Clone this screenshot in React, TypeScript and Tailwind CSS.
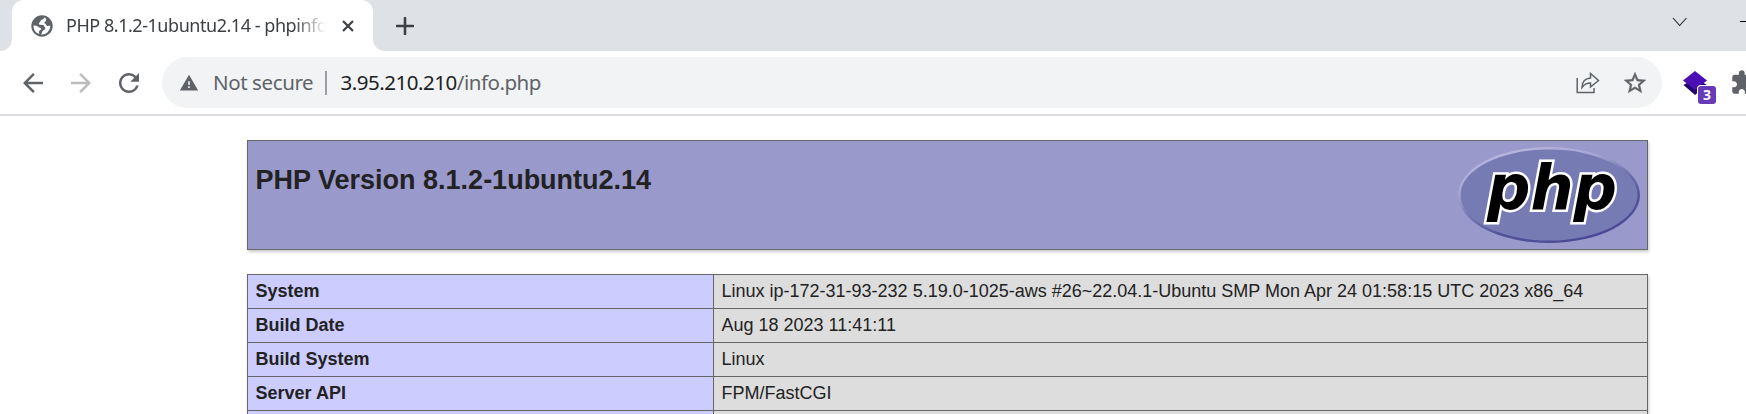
import React from "react";
import { MdArrowBack, MdArrowForward, MdRefresh, MdWarning, MdExtension } from "react-icons/md";

const rows: [string, string][] = [
  ["System", "Linux ip-172-31-93-232 5.19.0-1025-aws #26~22.04.1-Ubuntu SMP Mon Apr 24 01:58:15 UTC 2023 x86_64"],
  ["Build Date", "Aug 18 2023 11:41:11"],
  ["Build System", "Linux"],
  ["Server API", "FPM/FastCGI"],
  ["", ""],
];

function GlobeIcon() {
  return (
    <svg width="22" height="22" viewBox="0 0 22 22" className="shrink-0">
      <circle cx="11" cy="11" r="10.7" fill="#5f6368" />
      <path
        d="M13 2.500C13 4 11.500 4.500 10.300 5C9.300 5.500 9.500 7 8.500 7.500C7.500 8 7.500 9.500 9 9.800L12 10C13.500 10.300 13 12 14 12.500C15 13.300 14 14.500 13 14.800C11.300 15.300 11.500 17.500 10 19.400A8.500 8.500 0 0 0 19.400 11C18.500 10.500 17.500 11.300 16 10.900C14.800 10.500 15.300 9 14 8.600C13 8.200 13.200 7 14.300 6.600C15.300 6.200 15.500 4.300 14.500 3Z"
        fill="#fff"
      />
      <path d="M2.500 10.500C4 10.500 6.500 10.500 7.500 12C8 13 10.300 12.500 10.200 14C10 15.500 8 15 8 16.500L8.200 19A8.500 8.500 0 0 1 2.500 10.500Z" fill="#fff" />
    </svg>
  );
}

function TabStrip() {
  return (
    <div className="flex h-[51px] bg-[#dee1e6]">
      <div className="flex w-3 items-end bg-white">
        <div className="h-full w-3 rounded-br-[12px] bg-[#dee1e6]" />
      </div>
      <div className="flex h-[51px] w-[361px] items-center rounded-t-[12px] bg-white pl-[19px]">
        <GlobeIcon />
        <div className="ml-[13px] w-[262px] whitespace-nowrap text-[18px] tracking-[-0.46px] text-[#3c4043] [mask-image:linear-gradient(to_right,black_228px,transparent_260px)]">
          PHP 8.1.2-1ubuntu2.14 - phpinfo
        </div>
        <svg width="12" height="12" viewBox="0 0 12 12" className="ml-[14px] shrink-0">
          <path d="M1 1L11 11M11 1L1 11" stroke="#3c4043" strokeWidth="2.200" />
        </svg>
      </div>
      <div className="w-3 bg-white">
        <div className="h-full w-3 rounded-bl-[12px] bg-[#dee1e6]" />
      </div>
      <div className="flex flex-1 items-center">
        <svg width="18" height="18" viewBox="0 0 18 18" className="ml-[11px]">
          <path d="M9 1V17M1 9H17" stroke="#3c4043" strokeWidth="2.600" strokeLinecap="round" />
        </svg>
      </div>
      <svg width="16" height="10" viewBox="0 0 16 10" className="mt-[17px] mr-[52px]">
        <path d="M1 1L7.700 8.500L14.500 1" fill="none" stroke="#222" strokeWidth="1.100" />
      </svg>
      <div className="mt-[21px] h-px w-1.5 bg-black" />
    </div>
  );
}

function ShareIcon() {
  return (
    <svg width="24" height="22" viewBox="0 0 24 22" fill="none" stroke="#5f6368" strokeWidth="1.500">
      <path d="M1.200 6V20.500H18V16" />
      <path d="M6 15.500C6 10 9 6.500 14.500 6V1.500L22.500 8.500L14.500 15V11C10.500 11 8 12.500 6 15.500Z" />
    </svg>
  );
}

function StarIcon() {
  return (
    <svg width="26" height="26" viewBox="0 0 24 24" fill="#5f6368" stroke="#5f6368" strokeWidth="0.4">
      <path d="M22 9.240l-7.190-.62L12 2 9.190 8.630 2 9.240l5.460 4.730L5.820 21 12 17.270 18.180 21l-1.630-7.030L22 9.240zM12 15.400l-3.760 2.270 1-4.280-3.320-2.880 4.380-.38L12 6.100l1.710 4.040 4.380.38-3.320 2.880 1 4.280L12 15.400z" />
    </svg>
  );
}

function Toolbar() {
  return (
    <div className="flex h-[65px] items-center overflow-hidden border-b-2 border-[#dcdde0] bg-white">
      <MdArrowBack className="ml-[18px] size-[30px] shrink-0 text-[#5f6368]" />
      <MdArrowForward className="ml-[18px] size-[30px] shrink-0 text-[#babcbe]" />
      <MdRefresh className="ml-[18px] size-[30px] shrink-0 text-[#5f6368]" />
      <div className="ml-[18px] flex h-[51px] w-[1500px] shrink-0 items-center rounded-full bg-[#f1f3f4] text-[20.5px] whitespace-nowrap">
        <MdWarning className="ml-[17px] size-5 text-[#5f6368]" />
        <span className="ml-[14px] w-[112px] tracking-[-0.4px] text-[#5f6368]">Not secure</span>
        <div className="h-6 w-0.5 bg-[#9aa0a6]" />
        <span className="ml-[13.5px] tracking-[-0.48px] text-[#202124]">
          3.95.210.210<span className="text-[#5f6368]">/info.php</span>
        </span>
        <div className="mr-[14px] ml-auto flex items-center gap-[22px]">
          <ShareIcon />
          <StarIcon />
        </div>
      </div>
      <div className="relative ml-[21px] h-[34px] w-[34px] shrink-0">
        <svg width="25" height="25" viewBox="0 0 25 25" className="mt-[5px]">
          <path d="M0.500 14L12 7L24 14L12 24Z" fill="#1f0668" />
          <path d="M0 9.500L12 0L24 9.500L12 19Z" fill="#4b0fb4" />
        </svg>
        <div className="absolute top-[20px] left-[15px] flex size-[18px] items-center justify-center rounded-[3px] bg-[#673ab7] text-[14px] leading-none font-bold text-white ring-1 ring-white">
          3
        </div>
      </div>
      <MdExtension className="ml-[13px] size-[27px] shrink-0 text-[#5f6368]" />
    </div>
  );
}

function PhpLogo() {
  return (
    <svg width="182" height="96" viewBox="0 0 182 96">
      <defs>
        <linearGradient id="rim" x1="0.200" y1="0" x2="0.750" y2="1">
          <stop offset="0" stopColor="#b9b9e0" />
          <stop offset="0.300" stopColor="#a6a6d4" />
          <stop offset="0.500" stopColor="#7377b0" />
          <stop offset="0.700" stopColor="#54549a" />
          <stop offset="1" stopColor="#484893" />
        </linearGradient>
      </defs>
      <ellipse cx="91" cy="48" rx="91" ry="48" fill="url(#rim)" />
      <ellipse cx="91" cy="48" rx="88.500" ry="45.500" fill="#777bb4" />
      <text
        x="29"
        y="62"
        fontFamily="DejaVu Sans"
        fontSize="62"
        fontWeight="700"
        fontStyle="italic"
        textLength="130"
        lengthAdjust="spacingAndGlyphs"
        stroke="#fff"
        strokeWidth="5"
        paintOrder="stroke"
        fill="#000"
      >
        php
      </text>
    </svg>
  );
}

export default function App() {
  return (
    <div className="h-[414px] overflow-hidden bg-white font-['Noto_Sans',sans-serif]">
      <TabStrip />
      <Toolbar />
      <main className="ml-[247px] w-[1401px] pt-6 font-['Liberation_Sans',sans-serif] text-[#222]">
        <header className="flex h-[110px] justify-between border border-[#666] bg-[#9999cc] pr-[7px] pl-[7.5px] shadow-[1px_2px_3px_#ccc]">
          <h1 className="mt-[22px] text-[27px] leading-[34px] font-bold">PHP Version 8.1.2-1ubuntu2.14</h1>
          <div className="pt-1.5">
            <PhpLogo />
          </div>
        </header>
        <div className="mt-6 border-t border-[#666] shadow-[1px_2px_3px_#ccc]">
          {rows.map(([name, value]) => (
            <div key={name} className="flex h-[34px] border-x border-b border-[#666] text-[18px] leading-[32px]">
              <div className="w-[466px] shrink-0 border-r border-[#666] bg-[#ccccff] pl-[7.5px] font-bold">{name}</div>
              <div className="flex-1 bg-[#dddddd] pl-[7.5px] whitespace-nowrap">{value}</div>
            </div>
          ))}
        </div>
      </main>
    </div>
  );
}
